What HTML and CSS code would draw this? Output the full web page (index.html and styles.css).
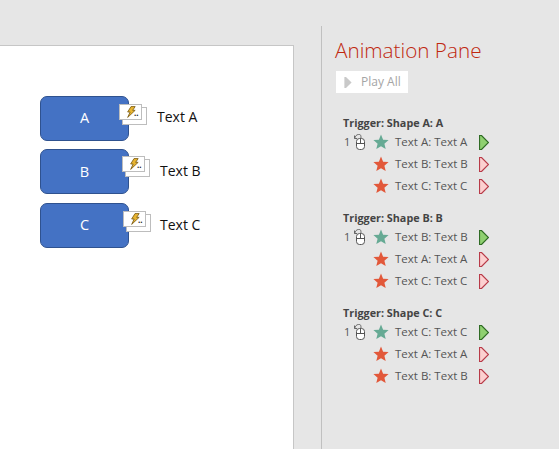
FILE: index.html
```html
<!DOCTYPE html>
<html lang="en">
<head>
<meta charset="utf-8">
<title>Animation Pane</title>
<link rel="stylesheet" href="styles.css">
</head>
<body>
<svg class="defs" width="0" height="0" aria-hidden="true">
  <defs>
    <symbol id="star" viewBox="0 0 16 16"><path d="M8 .6l2.1 5.1 5.5.4-4.2 3.6 1.3 5.4L8 12.2l-4.7 2.9 1.3-5.4L.4 6.1l5.5-.4z"/></symbol>
    <symbol id="tri" viewBox="0 0 10 15"><path d="M.5.5h2l7 7-7 7h-2z"/></symbol>
    <symbol id="mouse" viewBox="0 0 11 16">
      <path d="M.5 1.5v3h2.5M.5 4.5C1.5 2 2.500 .5 4.500 .5h1c1 0 1.500 1 1.500 3.500" fill="none" stroke="#666"/>
      <rect x="2.500" y="4.500" width="8" height="11" rx="3" fill="#fff" stroke="#555"/>
      <path d="M2.500 9.500h8M6.500 4.500v5" stroke="#555" fill="none"/>
    </symbol>
    <symbol id="bolt" viewBox="0 0 12 14"><path d="M6 .5h5L8 5h3L2 13.500 5 7H2z" fill="#e9b530" stroke="#7a5c14" stroke-width="1"/></symbol>
  </defs>
</svg>
<main class="app">
  <section class="stage">
    <div class="slide">
      <div class="shape shape-a">A</div>
      <div class="badge badge-a"><span class="badge-front"><svg class="bolt"><use href="#bolt"/></svg><span class="dots">..</span></span></div>
      <div class="label label-a">Text A</div>

      <div class="shape shape-b">B</div>
      <div class="badge badge-b"><span class="badge-front"><svg class="bolt"><use href="#bolt"/></svg><span class="dots">..</span></span></div>
      <div class="label label-b">Text B</div>

      <div class="shape shape-c">C</div>
      <div class="badge badge-c"><span class="badge-front"><svg class="bolt"><use href="#bolt"/></svg><span class="dots">..</span></span></div>
      <div class="label label-c">Text C</div>
    </div>
  </section>

  <aside class="pane">
    <h1 class="pane-title">Animation Pane</h1>
    <button class="play-all" type="button"><svg class="play-icon"><use href="#tri"/></svg>Play All</button>

    <div class="group">
      <h2 class="trigger">Trigger: Shape A: A</h2>
      <div class="row"><span class="num">1</span><svg class="mouse"><use href="#mouse"/></svg><svg class="star green"><use href="#star"/></svg><span class="name">Text A: Text A</span><svg class="tri on"><use href="#tri"/></svg></div>
      <div class="row"><span class="num"></span><span class="mouse"></span><svg class="star red"><use href="#star"/></svg><span class="name">Text B: Text B</span><svg class="tri off"><use href="#tri"/></svg></div>
      <div class="row"><span class="num"></span><span class="mouse"></span><svg class="star red"><use href="#star"/></svg><span class="name">Text C: Text C</span><svg class="tri off"><use href="#tri"/></svg></div>
    </div>

    <div class="group">
      <h2 class="trigger">Trigger: Shape B: B</h2>
      <div class="row"><span class="num">1</span><svg class="mouse"><use href="#mouse"/></svg><svg class="star green"><use href="#star"/></svg><span class="name">Text B: Text B</span><svg class="tri on"><use href="#tri"/></svg></div>
      <div class="row"><span class="num"></span><span class="mouse"></span><svg class="star red"><use href="#star"/></svg><span class="name">Text A: Text A</span><svg class="tri off"><use href="#tri"/></svg></div>
      <div class="row"><span class="num"></span><span class="mouse"></span><svg class="star red"><use href="#star"/></svg><span class="name">Text C: Text C</span><svg class="tri off"><use href="#tri"/></svg></div>
    </div>

    <div class="group">
      <h2 class="trigger">Trigger: Shape C: C</h2>
      <div class="row"><span class="num">1</span><svg class="mouse"><use href="#mouse"/></svg><svg class="star green"><use href="#star"/></svg><span class="name">Text C: Text C</span><svg class="tri on"><use href="#tri"/></svg></div>
      <div class="row"><span class="num"></span><span class="mouse"></span><svg class="star red"><use href="#star"/></svg><span class="name">Text A: Text A</span><svg class="tri off"><use href="#tri"/></svg></div>
      <div class="row"><span class="num"></span><span class="mouse"></span><svg class="star red"><use href="#star"/></svg><span class="name">Text B: Text B</span><svg class="tri off"><use href="#tri"/></svg></div>
    </div>
  </aside>
</main>
</body>
</html>
```

FILE: styles.css
```css
* { box-sizing: border-box; }
html, body { margin: 0; height: 100%; }
body {
  background: #e6e6e6;
  font-family: "Open Sans", "Noto Sans", "Liberation Sans", sans-serif;
  overflow: hidden;
}
.defs { position: absolute; }
.app { display: flex; width: 559px; height: 449px; }

.stage { width: 321px; padding-top: 45px; flex: none; }
.slide {
  position: relative;
  width: 294px;
  height: 404px;
  background: #fff;
  border-top: 1px solid #c6c6c6;
  border-right: 1px solid #c6c6c6;
}
.shape {
  position: absolute;
  left: 40px;
  width: 89px;
  height: 45px;
  display: flex;
  align-items: center;
  justify-content: center;
  padding-bottom: 2px;
  background: #4472c4;
  border: 1px solid #2f528f;
  border-radius: 7px;
  color: #fff;
  font-size: 14.500px;
}
.shape-a { top: 50px; }
.shape-b { top: 103px; padding-bottom: 0; }
.shape-c { top: 157px; }

.badge {
  position: absolute;
  width: 26px;
  height: 19px;
}
.badge::before {
  content: "";
  position: absolute;
  left: 3px;
  top: 3px;
  width: 23px;
  height: 16px;
  background: #fff;
  border: 1px solid #bdbdbd;
}
.badge-front {
  position: absolute;
  left: 0;
  top: 0;
  width: 23px;
  height: 16px;
  background: #fff;
  border: 1px solid #bdbdbd;
}
.bolt { position: absolute; left: 6px; top: 1px; width: 10px; height: 12px; }
.dots { position: absolute; left: 14px; top: 3px; font-size: 8px; line-height: 10px; font-weight: 700; color: #222; }
.badge-a { left: 119px; top: 58px; }
.badge-b { left: 122px; top: 110px; }
.badge-c { left: 123px; top: 165px; }

.label { position: absolute; font-size: 14px; line-height: 20px; color: #111; }
.label-a { left: 157px; top: 61px; }
.label-b { left: 160px; top: 115px; }
.label-c { left: 160px; top: 169px; }

.pane {
  flex: 1;
  margin-top: 26px;
  padding: 0 0 0 13px;
  border-left: 1px solid #c0c0c0;
}
.pane-title {
  margin: 10px 0 0;
  font-size: 20.700px;
  line-height: 28px;
  font-weight: 300;
  color: #c0280f;
}
.play-all {
  display: flex;
  align-items: center;
  width: 72px;
  height: 22px;
  margin: 7px 0 0 1px;
  padding: 0 0 0 8px;
  border: 0;
  background: #fff;
  color: #a5a5a5;
  font: 12px/22px "Open Sans", "Noto Sans", sans-serif;
}
.play-icon { width: 8px; height: 13px; margin-right: 9px; fill: #c9c9c9; }

.group { margin-left: 8px; height: 95px; }
.play-all + .group { margin-top: 22px; }
.trigger {
  margin: 0;
  font-size: 10.800px;
  line-height: 15px;
  font-weight: 700;
  color: #444;
}
.row {
  display: flex;
  align-items: center;
  height: 22px;
  font-size: 11.500px;
  color: #555;
}
.trigger + .row { margin-top: 1px; }
.num { width: 6px; flex: none; font-size: 11px; color: #555; margin-left: 1px; margin-right: 1px; padding-bottom: 2px; }
.mouse { width: 11px; height: 16px; flex: none; margin-left: 3px; }
.star { width: 16px; height: 16px; flex: none; margin-left: 8px; }
.star.green { fill: #66aa94; }
.star.red { fill: #e2583a; }
.name { width: 83px; margin-left: 6px; flex: none; white-space: nowrap; padding-bottom: 2px; }
.tri { width: 10px; height: 15px; flex: none; margin-left: 1px; stroke-width: 1.200; }
.tri.on { fill: #8fd070; stroke: #2f6b24; }
.tri.off { fill: #fcd0d0; stroke: #b83a48; }
```
